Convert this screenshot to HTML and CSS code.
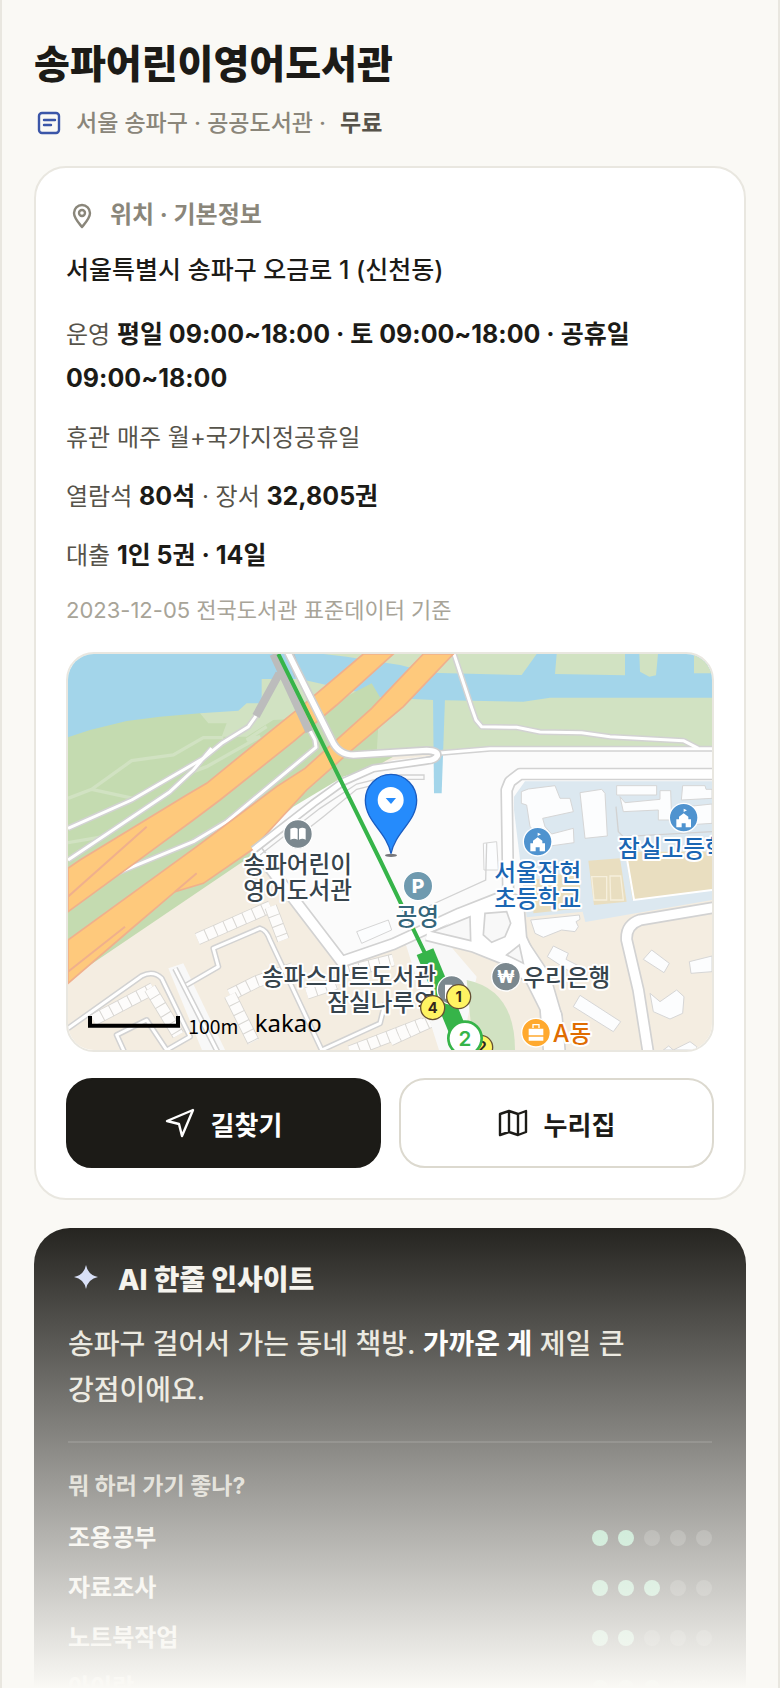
FILE: index.html
```
<!DOCTYPE html>
<html lang="ko">
<head>
    <meta charset="UTF-8">
    <meta name="viewport" content="width=device-width, initial-scale=1.0">
    <title>송파어린이영어도서관</title>
    <link rel="stylesheet" href="styles.css">
</head>
<body>

<main class="page">
    <h1>송파어린이영어도서관</h1>
    <div class="subtitle">
        <svg class="icon" viewBox="0 0 30 30" aria-hidden="true">
            <rect x="5" y="5" width="20" height="20" rx="3"/>
            <path d="M10 12h11M10 17h7"/>
        </svg>
        <span>서울 송파구 · 공공도서관 ·</span>
        <strong>무료</strong>
    </div>

    <!-- Location and basic info -->
    <section class="card">
        <h2 class="card-title">
            <svg class="icon" viewBox="0 0 30 30" aria-hidden="true">
                <path d="M16 27C12 22 8 18 8 13a8 8 0 0 1 16 0c0 5-4 9-8 14z"/>
                <circle cx="16" cy="13" r="3"/>
            </svg>
            위치 · 기본정보
        </h2>
        <p class="address">서울특별시 송파구 오금로 1 (신천동)</p>
        <div class="facts">
            <p>운영 <b>평일 09:00~18:00 · 토 09:00~18:00 · 공휴일 09:00~18:00</b></p>
            <p>휴관 매주 월+국가지정공휴일</p>
            <p>열람석 <b>80석</b> · 장서 <b>32,805권</b></p>
            <p>대출 <b>1인 5권 · 14일</b></p>
        </div>
        <p class="source">2023-12-05 전국도서관 표준데이터 기준</p>

        <div class="map">
            <svg viewBox="24 42 1932 1188" preserveAspectRatio="xMidYMid slice" role="img" aria-label="지도">
                <defs>
                    <g id="roads-wide">
                        <path d="M1500 1240L1490 1130 1455 1010 1385 905 1345 780 1340 450 1350 425 1380 402H1970"/>
                        <path d="M585 625L845 965 1000 912 1200 820 1340 765"/>
                        <path d="M1100 885L1240 920 1340 960 1440 1040"/>
                        <path d="M1765 1240L1735 1050 1700 900Q1697 855 1740 840L1960 803"/>
                    </g>
                    <g id="roads-slim">
                        <path d="M24 565L215 480 430 355 485 310 565 260 590 225"/>
                        <path d="M24 660L330 455 400 390 455 325"/>
                        <path d="M170 700L400 605 500 545 768 322 765 300 750 272"/>
                        <path d="M1182 42L1234 200 1248 240 1265 260 1370 262 1440 276 1565 278 1650 290 1870 302 1915 325"/>
                        <path d="M1130 340L1290 326H1960"/>
                        <path d="M24 1165L245 1008Q280 990 305 1015L390 1190 320 1230 260 1140 170 1185 195 1240"/>
                        <path d="M345 985L475 1240M380 1035L475 980 460 925 600 865Q620 870 630 900L785 1230 960 1150 975 1090"/>
                    </g>
                    <path id="overpass" d="M680 30L815 300Q835 345 880 345L1100 331Q1135 332 1132 347 1125 360 1100 362L940 385 850 425 760 490 580 630"/>
                    <path id="school" d="M-22 22V-2h8v-8L0-20l14 10v8h8v24H6V10h-12v12zM0-20v-14l10 5-10 5z"/>
                </defs>

                <!-- land and water -->
                <rect class="block" x="24" y="42" width="1932" height="1188"/>
                <path class="water" d="M24 42H1956V320H24z"/>
                <path class="park" d="M790 42L860 50 1020 75 1110 98 1385 105 1430 42zM1490 42L1485 102 1695 106V42zM1738 42L1740 95 1768 110 1788 106 1794 42zM1902 42V100H1956V42z"/>
                <path class="park" d="M605 117L720 117 880 153 955 172 1120 180 1390 185 1470 173H1956V340H1000L600 700 420 220 535 212 560 190H605z"/>
                <path class="grass" d="M24 292L90 270 200 243 300 230 420 220 445 250 500 250 485 290 560 290 640 240 735 235 935 130 960 172 950 340 1000 350 850 430 570 650 24 1020z"/>
                <path class="trail" d="M24 475L95 448 215 362 340 345 430 293H490M95 448L220 475M400 395L440 380 600 290 560 300 620 260M24 608L130 590"/>
                <path class="campus" d="M570 620L700 500 850 410 1000 360 1280 330 1956 318V780H1340L1000 905 840 955z"/>
                <path class="water" d="M1119 175H1155L1145 460H1122z"/>

                <!-- school zone -->
                <path class="zone" d="M1362 470L1395 424H1956V780L1576 846 1568 815 1400 832 1385 700 1362 510z"/>
                <path class="field" d="M1585 662L1680 655 1700 785 1602 795zM1695 635H1956V750L1718 780zM1420 720L1560 690V805L1420 820z"/>
                <path class="field-line" d="M1595 710H1640V780H1602zM1650 708H1682L1690 780H1652z"/>
                <path class="field-edge" d="M1698 640L1722 780 1956 750"/>
                <path class="building" d="M1384 455L1405 447 1485 437 1500 475 1530 475 1540 515 1448 535 1455 560 1475 582 1540 565 1542 608 1470 618 1410 560 1400 495 1384 490zM1560 458L1625 448 1635 460 1642 588 1575 595zM1670 437H1790V465H1670zM1680 470L1695 488 1800 478V452H1832L1835 540H1795V510L1690 515zM1868 437H1935L1938 448H1956V475L1864 480zM1880 500L1956 492V550L1880 555z"/>
                <path class="building" d="M1412 840L1558 825 1560 838 1548 845 1555 860 1545 875 1505 870 1450 892 1425 880zM1270 610L1310 605 1315 690H1272z"/>
                <path class="building" d="M1480 918L1525 940 1518 958 1580 990 1560 1015 1462 950zM1560 1066L1682 1145 1660 1175 1540 1100zM1775 930L1828 970 1812 998 1750 958zM1888 965L1956 948V995L1893 1000zM1770 1060L1800 1085 1850 1050 1872 1070 1868 1120 1830 1137 1780 1115zM1810 1230L1826 1218 1840 1230 1890 1205 1910 1220V1230zM890 875L985 840 995 870 905 910z"/>

                <!-- apartment rows -->
                <path class="row-edge" d="M412 897L632 800M100 1140L280 1045M510 1065L590 1025 700 985M740 1060L830 1030M840 1000L1000 960M870 1235L1090 1150M990 1200L1110 1145"/>
                <path class="row-fill" d="M412 897L632 800M100 1140L280 1045M510 1065L590 1025 700 985M740 1060L830 1030M840 1000L1000 960M870 1235L1090 1150M990 1200L1110 1145"/>
                <path class="row-edge" d="M632 800L670 900M270 1045L355 1185M510 1065L580 1205"/>
                <path class="row-fill" d="M632 800L670 900M270 1045L355 1185M510 1065L580 1205"/>

                <path class="plaza" d="M325 985L370 970 500 1240H430zM1035 905L1130 870 1250 1010 1200 1240H1140z"/>
                <path class="park" d="M1220 1020Q1365 1050 1365 1230H1240z"/>

                <!-- roads -->
                <use href="#roads-wide" class="wide-edge"/>
                <path class="junction" d="M1120 878L1270 780 1340 755 1390 770 1400 890 1440 980 1505 1120 1515 1235H1450L1440 1110 1390 1010 1290 948z"/>
                <use href="#roads-wide" class="wide-fill"/>
                <use href="#roads-slim" class="slim-edge"/>
                <use href="#roads-slim" class="slim-fill"/>
                <path class="lane" d="M600 645L780 505 890 432 1000 405H1092V418H1010L890 448 790 530 720 585M1668 500L1675 575 1690 590 1956 575M1080 810L1277 720 1280 610"/>
                <path class="island" d="M1118 875L1230 830 1232 902zM1275 820L1340 815 1352 850 1335 890 1295 907 1270 885zM1340 945L1378 915 1390 970z"/>
                <path class="highway" d="M910 42L735 190 630 275 440 430 380 465 60 660 24 685V815L230 665 400 540 480 480 700 305 830 195 1000 42z"/>
                <path class="highway" d="M1090 42L1020 115 935 205 735 385 650 440 410 620 24 900V1030L210 870 345 755 430 730 575 630 740 450 870 335 1030 200 1180 42z"/>
                <path class="ramp" d="M24 770L260 560M24 995L195 860M345 755L410 700"/>
                <path class="bridge" d="M640 42L748 275M658 100L588 228M690 42L715 108"/>
                <use href="#overpass" class="over-edge"/>
                <use href="#overpass" class="over-fill"/>

                <!-- subway -->
                <path class="subway" d="M655 42L960 660 1095 940"/>
                <path class="station" d="M1095 935L1205 1200"/>

                <!-- places -->
                <g class="label">
                    <text x="713" y="700">송파어린이</text>
                    <text x="713" y="778">영어도서관</text>
                    <text class="end" x="1128" y="1036">송파스마트도서관</text>
                    <text class="end" x="1128" y="1114">잠실나루역</text>
                    <text class="start" x="1390" y="1038">우리은행</text>
                    <text class="parking" x="1072" y="855">공영</text>
                    <text class="blue" x="1433" y="724">서울잠현</text>
                    <text class="blue" x="1433" y="802">초등학교</text>
                    <text class="blue start" x="1674" y="650">잠실고등학교</text>
                    <text class="orange start" x="1478" y="1206">A동</text>
                </g>
                <g class="dot-gray">
                    <circle cx="714" cy="582" r="43"/>
                    <circle cx="1338" cy="1010" r="43"/>
                    <circle cx="1175" cy="1050" r="43"/>
                </g>
                <circle class="dot-parking" cx="1074" cy="738" r="44"/>
                <circle class="dot-blue" cx="1433" cy="605" r="43"/>
                <circle class="dot-blue" cx="1871" cy="533" r="43"/>
                <circle class="dot-orange" cx="1428" cy="1178" r="43"/>
                <g class="glyph">
                    <path d="M691 566q14-6 22 0v33q-10-6-22 0zM717 566q10-6 20 0v33q-10-6-20 0zM1155 1034h20l6 6h14v36h-40z"/>
                    <use href="#school" x="1433" y="612"/>
                    <use href="#school" x="1871" y="540"/>
                    <path d="M1406 1166h44v20h-44zM1406 1190h44v12h-44z"/>
                </g>
                <path class="handle" d="M1419 1164v-10h18v10"/>
                <text class="glyph-text" x="1074" y="759">P</text>
                <text class="glyph-text small" x="1338" y="1028">₩</text>

                <!-- exits -->
                <g class="exit">
                    <circle cx="1118" cy="1103" r="36"/><text x="1118" y="1119">4</text>
                    <circle cx="1196" cy="1070" r="36"/><text x="1196" y="1086">1</text>
                    <circle cx="1262" cy="1222" r="36"/><text x="1266" y="1236">2</text>
                </g>
                <circle class="line-two" cx="1215" cy="1195" r="50"/>
                <text class="line-two-text" x="1215" y="1217">2</text>

                <!-- marker -->
                <ellipse class="shadow" cx="993" cy="646" rx="18" ry="5"/>
                <path class="marker" d="M993 641C980 575 916 545 916 481a77 78 0 0 1 154 0C1070 545 1006 575 993 641z"/>
                <circle class="marker-hole" cx="992" cy="480" r="39"/>
                <path class="marker-arrow" d="M977 474h31l-15 18z"/>

                <!-- scale -->
                <path class="scale" d="M90 1128V1157H354V1128"/>
                <text class="scale-text" x="385" y="1181">100m</text>
                <text class="brand" x="584" y="1175">kakao</text>
            </svg>
        </div>

        <div class="actions">
            <button type="button" class="btn btn-dark">
                <svg class="icon" viewBox="0 0 30 30" aria-hidden="true"><path d="M28 2L2 13l12 3 3 12z"/></svg>
                길찾기
            </button>
            <button type="button" class="btn">
                <svg class="icon" viewBox="0 0 30 30" aria-hidden="true"><path d="M2 6l9-3 9 3 8-3v21l-8 3-9-3-9 3zM11 3v21M20 6v21"/></svg>
                누리집
            </button>
        </div>
    </section>

    <!-- AI insight -->
    <section class="insight">
        <h2>
            <svg viewBox="0 0 36 36" aria-hidden="true"><path d="M18 3Q20 13 30 15 20 17 18 27 16 17 6 15 16 13 18 3z"/></svg>
            AI 한줄 인사이트
        </h2>
        <p class="insight-text">송파구 걸어서 가는 동네 책방. <b>가까운 게</b> 제일 큰 강점이에요.</p>
        <h3>뭐 하러 가기 좋나?</h3>
        <ul class="ratings">
            <li>조용공부 <span class="dots"><i class="on"></i><i class="on"></i><i></i><i></i><i></i></span></li>
            <li>자료조사 <span class="dots"><i class="on"></i><i class="on"></i><i class="on"></i><i></i><i></i></span></li>
            <li>노트북작업 <span class="dots"><i class="on"></i><i class="on"></i><i></i><i></i><i></i></span></li>
            <li>아이랑 <span class="dots"><i class="on"></i><i class="on"></i><i class="on"></i><i></i><i></i></span></li>
        </ul>
    </section>
    <div class="fade"></div>
</main>

</body>
</html>
```
FILE: styles.css
```
* {
    box-sizing: border-box;
}
body {
    margin: 0;
    background-color: #faf9f5;
    color: #1c1b17;
    font-family: Inter, "Noto Sans CJK KR", sans-serif;
    word-break: keep-all;
}
h1, h2, h3, p, ul {
    margin: 0;
    padding: 0;
}
.page {
    position: relative;
    height: 100vh;
    overflow: hidden;
    padding: 40px 32px 0;
    border-left: 2px solid #e9e7e0;
    border-right: 2px solid #e9e7e0;
}
h1 {
    font-size: 39px;
    line-height: 48px;
    font-weight: 800;
}
.icon {
    flex: none;
    width: 30px;
    height: 30px;
    fill: none;
    stroke: currentColor;
    stroke-width: 2.4;
    stroke-linecap: round;
    stroke-linejoin: round;
}
.subtitle {
    display: flex;
    align-items: center;
    margin: 17px 0 25px;
    font-size: 23px;
    line-height: 36px;
    font-weight: 500;
    color: #8a867a;
}
.subtitle .icon {
    margin-right: 12px;
    color: #3b56a8;
}
.subtitle strong {
    margin-left: 14px;
    color: #56534a;
}

/* Info card */
.card {
    padding: 30px;
    background-color: #fff;
    border: 2px solid #e9e7e0;
    border-radius: 32px;
}
.card-title {
    display: flex;
    align-items: center;
    gap: 14px;
    margin-bottom: 16px;
    font-size: 24px;
    line-height: 34px;
    color: #8a867a;
}
.address {
    margin-bottom: 21px;
    font-size: 25px;
    line-height: 44px;
    font-weight: 500;
}
.facts {
    display: flex;
    flex-direction: column;
    gap: 15px;
    font-size: 24px;
    line-height: 44px;
    color: #56534a;
}
.facts b {
    font-size: 25px;
    line-height: 30px;
    color: #1c1b17;
}
.source {
    margin: 14px 0 24px;
    font-size: 22px;
    line-height: 36px;
    color: #a8a498;
}
.map {
    overflow: hidden;
    border: 2px solid #e9e7e0;
    border-radius: 28px;
}
.map svg {
    display: block;
    width: 100%;
}
.actions {
    display: flex;
    gap: 18px;
    margin-top: 26px;
}
.btn {
    flex: 1;
    display: flex;
    align-items: center;
    justify-content: center;
    gap: 16px;
    height: 90px;
    border: 2px solid #dcd9cf;
    border-radius: 26px;
    background-color: #fff;
    color: #1c1b17;
    font-family: inherit;
    font-size: 26px;
    font-weight: 700;
    cursor: pointer;
}
.btn-dark {
    background-color: #1c1b17;
    border-color: #1c1b17;
    color: #fff;
}

/* Map drawing */
.block { fill: #f4ede1; }
.water { fill: #a3d5ea; }
.park { fill: #d1e2c2; }
.grass { fill: #c4dbb0; }
.campus { fill: #fbfbfb; }
.zone { fill: #dce8f0; }
.plaza { fill: #f8f8f8; }
.field { fill: #e9dec0; }
.trail, .field-line, .field-edge, .lane, .ramp, .bridge, .subway, .station, .scale, .handle { fill: none; }
.trail { stroke: #d1e2c2; stroke-width: 10; }
.field-line { stroke: #f6efdc; stroke-width: 4; }
.field-edge { stroke: #fff; stroke-width: 6; }
.building { fill: #fcfdfe; stroke: #d6d6d6; stroke-width: 3; }
.row-edge { fill: none; stroke: #d8d6d2; stroke-width: 38; }
.row-fill { fill: none; stroke: #fdfcfb; stroke-width: 33; stroke-dasharray: 28 3; }
.wide-edge, .wide-fill, .slim-edge, .slim-fill, .over-edge, .over-fill { fill: none; stroke-linejoin: round; }
.wide-edge { stroke: #d2d2d2; stroke-width: 38; }
.wide-fill { stroke: #fff; stroke-width: 28; }
.slim-edge { stroke: #d2d2d2; stroke-width: 18; }
.slim-fill { stroke: #fff; stroke-width: 9; }
.over-edge { stroke: #cfcfcf; stroke-width: 26; }
.over-fill { stroke: #fff; stroke-width: 16; }
.junction { fill: #fff; stroke: #d2d2d2; stroke-width: 5; }
.lane { stroke: #d2d2d2; stroke-width: 4; }
.island { fill: #f8f8f8; stroke: #d2d2d2; stroke-width: 5; }
.highway { fill: #fec97c; stroke: #f0b08c; stroke-width: 5; }
.ramp { stroke: #f0b08c; stroke-width: 6; }
.bridge { stroke: #bcbcbc; stroke-width: 24; }
.subway { stroke: #36b449; stroke-width: 12; }
.station { stroke: #36b449; stroke-width: 54; }
.label text {
    font-size: 71px;
    font-weight: 500;
    text-anchor: middle;
    fill: #37444c;
    stroke: #fff;
    stroke-width: 12;
    stroke-linejoin: round;
    paint-order: stroke;
}
.label .start { text-anchor: start; }
.label .end { text-anchor: end; }
.label .blue { fill: #1a66b3; }
.label .orange { fill: #e06c00; }
.label .parking { fill: #34657a; }
.dot-gray, .dot-blue, .dot-orange, .dot-parking { stroke: #fff; stroke-width: 4; }
.dot-gray { fill: #7b888f; }
.dot-blue { fill: #4f93cf; }
.dot-orange { fill: #ffa92e; }
.dot-parking { fill: #6f9aaf; }
.glyph { fill: #fff; }
.handle { stroke: #fff; stroke-width: 4; }
.glyph-text {
    font-size: 58px;
    font-weight: 800;
    text-anchor: middle;
    fill: #fff;
}
.small { font-size: 50px; }
.exit circle { fill: #fff462; stroke: #665033; stroke-width: 4; }
.exit text { font-size: 44px; font-weight: 700; text-anchor: middle; fill: #33261c; }
.line-two { fill: #fff; stroke: #36b449; stroke-width: 8; }
.line-two-text { font-size: 62px; font-weight: 600; text-anchor: middle; fill: #36b449; }
.shadow { fill: #77777a; }
.marker { fill: #258bfc; stroke: #1a5cc0; stroke-width: 4; }
.marker-hole { fill: #fff; }
.marker-arrow { fill: #258bfc; }
.scale { stroke: #000; stroke-width: 12; }
.scale-text { font-family: "Noto Sans CJK KR", sans-serif; font-size: 58px; }
.brand { font-family: "Noto Sans", sans-serif; font-size: 72px; }

/* Insight card */
.insight {
    margin-top: 28px;
    padding: 34px;
    border-radius: 36px;
    background-color: #1c1b17;
    color: #f4f2ec;
}
.insight h2 {
    display: flex;
    align-items: center;
    gap: 14px;
    font-size: 28px;
    line-height: 36px;
    font-weight: 800;
}
.insight h2 svg {
    width: 36px;
    height: 36px;
    fill: #d3dcf7;
}
.insight-text {
    margin: 23px 0 28px;
    font-size: 28px;
    line-height: 46px;
    font-weight: 500;
    color: #e6e3d9;
}
.insight-text b {
    color: #fff;
}
.insight h3 {
    padding-top: 26px;
    border-top: 2px solid rgba(255, 255, 255, 0.12);
    font-size: 23px;
    line-height: 34px;
    color: #c9c6bb;
}
.ratings {
    display: flex;
    flex-direction: column;
    gap: 14px;
    margin-top: 17px;
    list-style: none;
    font-size: 24px;
    line-height: 36px;
    font-weight: 600;
}
.ratings li {
    display: flex;
    align-items: center;
    justify-content: space-between;
}
.dots {
    display: flex;
    gap: 10px;
}
.dots i {
    width: 16px;
    height: 16px;
    border-radius: 50%;
    background-color: rgba(255, 255, 255, 0.18);
}
.dots .on {
    background-color: #7fd1a5;
}

/* Fades the end of the preview into the page background */
.fade {
    position: absolute;
    left: 0;
    right: 0;
    bottom: 0;
    height: 480px;
    margin: 0 -2px;
    background: linear-gradient(rgba(250, 249, 245, 0), #faf9f5);
    pointer-events: none;
}
```
